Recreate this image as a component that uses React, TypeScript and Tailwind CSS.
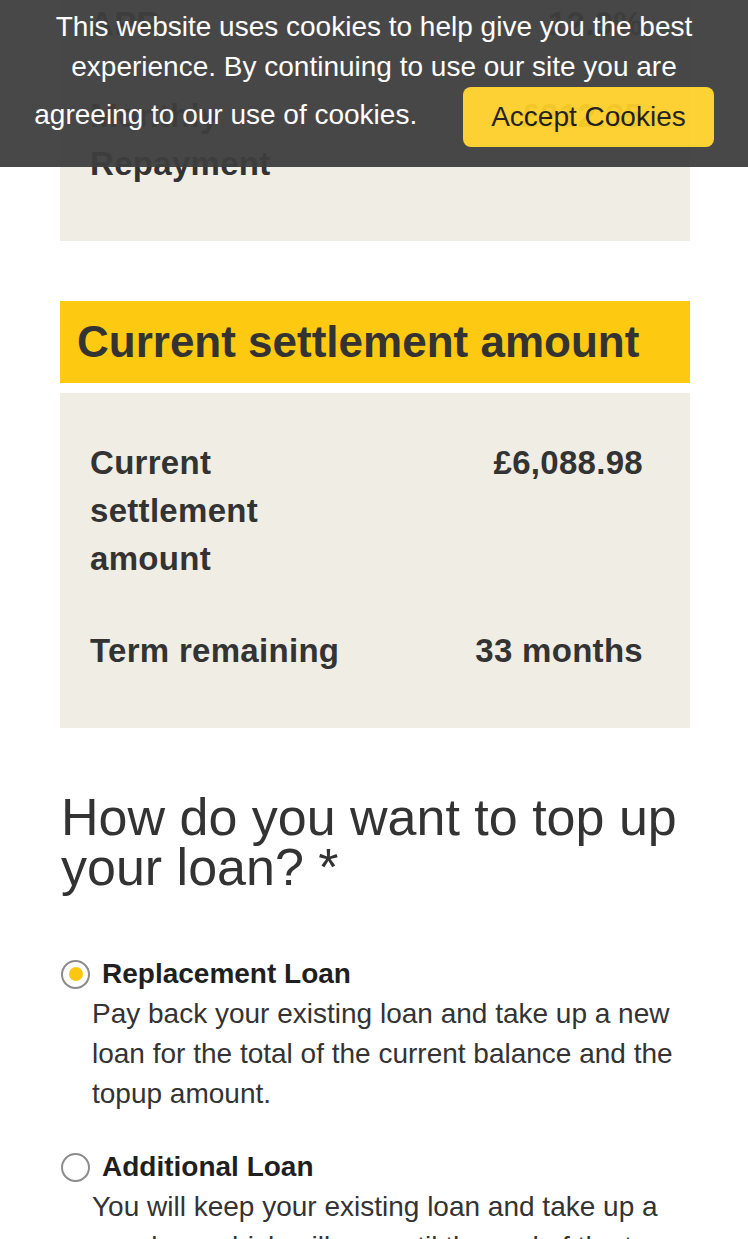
import React from "react";

type Row = { label: string; value: string };

function DetailPanel({ rows }: { rows: Row[] }) {
  return (
    <div className="bg-[#f0ede4] pl-[30px] pr-[47px] pt-[24px] pb-[31px]">
      {rows.map((row) => (
        <div key={row.label} className="grid grid-cols-[262px_1fr] py-[22px] text-[33px] leading-[48px] font-bold tracking-[0.3px]">
          <div>{row.label}</div>
          <div className="text-right">{row.value}</div>
        </div>
      ))}
    </div>
  );
}

function RadioOption({ title, text, checked }: { title: string; text: string; checked?: boolean }) {
  return (
    <div>
      <div className="flex items-center gap-[12px] leading-[40px]">
        <span className="w-[29px] h-[29px] rounded-full border-2 border-[#8c8c8c] bg-white flex items-center justify-center shrink-0">
          {checked && <span className="w-[14px] h-[14px] rounded-full bg-[#fcc710]" />}
        </span>
        <span className="text-[28px] font-bold text-[#1f1f1f]">{title}</span>
      </div>
      <p className="pl-[31px] text-[28px] leading-[40px] text-[#333]">{text}</p>
    </div>
  );
}

export default function App() {
  return (
    <div className="min-h-screen bg-white text-[#333] font-['Liberation_Sans',Arial,sans-serif] overflow-hidden">
      {/* Cookie banner */}
      <div className="fixed top-0 inset-x-0 z-10 bg-[#3f3f3f] opacity-95 text-center text-white text-[28px] leading-[40px] pt-[7px] pb-[20px] px-[20px]">
        This website uses cookies to help give you the best experience. By continuing to use our site you are agreeing to our use of cookies.
        <button className="inline-block align-middle ml-[46px] h-[60px] px-[28px] rounded-[8px] bg-[#fdd02a] text-[#1a1a1a] text-[28px]">
          Accept Cookies
        </button>
      </div>

      <div className="pl-[60px] pr-[58px] -mt-[46px] pb-[40px]">
        <DetailPanel
          rows={[
            { label: "APR", value: "12.9%" },
            { label: "Monthly Repayment", value: "£212.35" },
          ]}
        />

        <h2 className="mt-[60px] bg-[#fdca11] h-[82px] flex items-center pl-[17px] text-[44px] font-bold text-[#333]">
          Current settlement amount
        </h2>

        <div className="mt-[10px]">
          <DetailPanel
            rows={[
              { label: "Current settlement amount", value: "£6,088.98" },
              { label: "Term remaining", value: "33 months" },
            ]}
          />
        </div>

        <h3 className="mt-[64px] text-[52px] leading-[50px] text-[#333] pl-[1px]">
          How do you want to top up your loan? *
        </h3>

        <div className="mt-[62px] flex flex-col gap-[33px] pl-[1px]">
          <RadioOption
            checked
            title="Replacement Loan"
            text="Pay back your existing loan and take up a new loan for the total of the current balance and the topup amount."
          />
          <RadioOption
            title="Additional Loan"
            text="You will keep your existing loan and take up a new loan which will run until the end of the term of your existing loan."
          />
        </div>
      </div>
    </div>
  );
}
